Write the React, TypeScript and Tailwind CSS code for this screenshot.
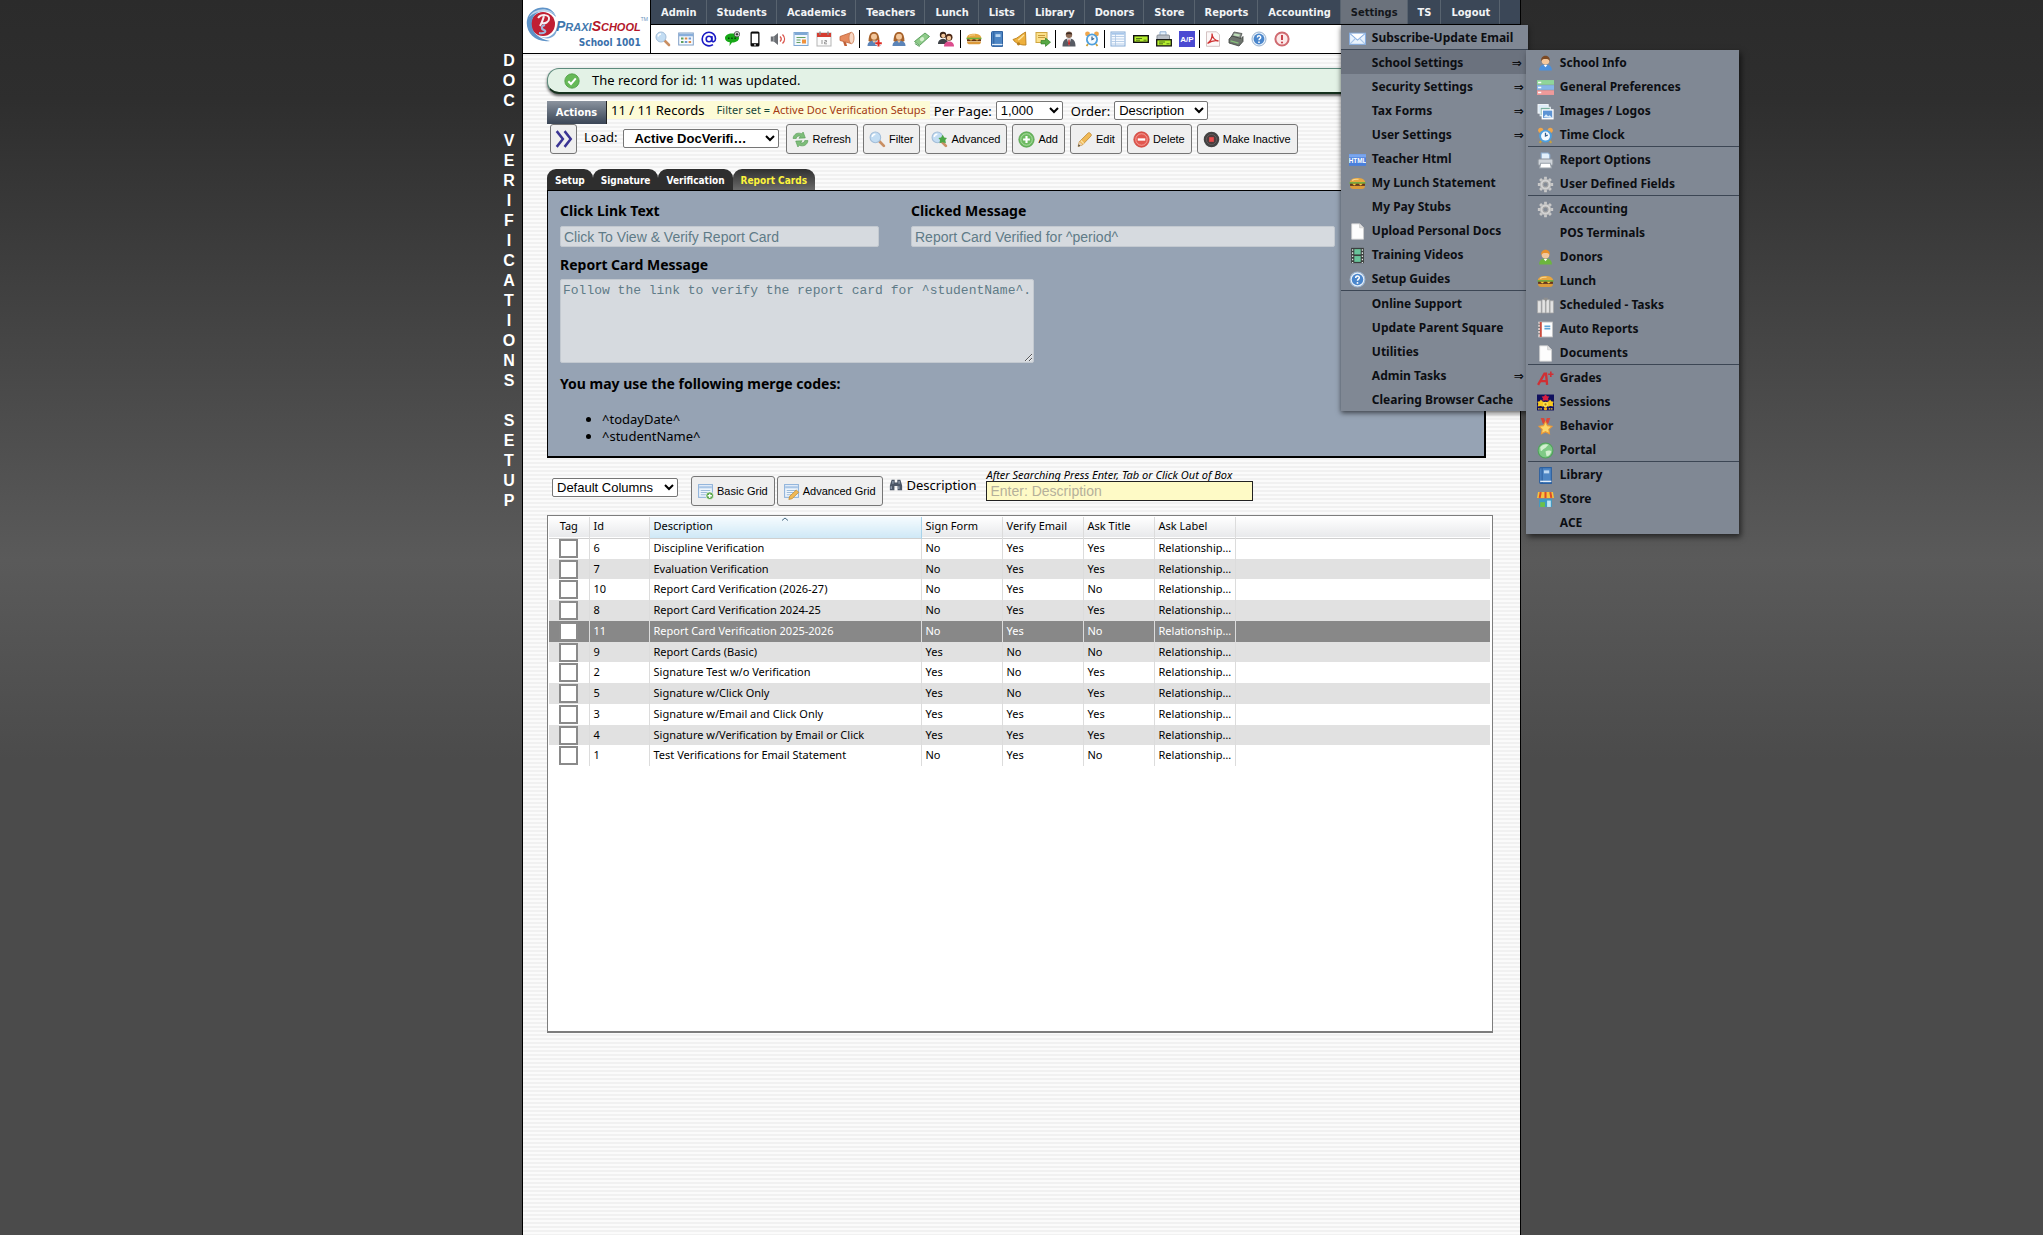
import type { ReactNode } from "react";

const G = {
  skin: "#f3c79b",
  hair: "#8a5428",
};

function Svg({ children, size = "size-4" }: { children: ReactNode; size?: string }) {
  return (
    <svg viewBox="0 0 16 16" className={`${size} shrink-0`} fill="none" aria-hidden="true">
      {children}
    </svg>
  );
}

const magnifier = (
  <>
    <path d="M9.5 9.5 14 14" stroke="#c98f63" strokeWidth="2.6" strokeLinecap="round" />
    <circle cx="6" cy="6" r="5" fill="#c3ddf3" stroke="#a3bdd8" />
    <path d="M3 5.500A3.200 3.200 0 0 1 6 3" stroke="#fff" strokeWidth="1.400" />
  </>
);

const sheet = (
  <>
    <rect x="1.500" y="1.500" width="13" height="12" fill="#eef5fc" stroke="#8fb2da" />
    <path d="M2 4h12" stroke="#a9c6e6" strokeWidth="2" />
    <path d="M3.500 7h9M3.500 9h9M3.500 11h9" stroke="#9dbbd9" />
  </>
);

const bust = (shirt: string, hair: string) => (
  <>
    <path d="M2 14.500c0-4 2.500-5.500 6-5.500s6 1.500 6 5.500z" fill={shirt} />
    <circle cx="8" cy="5.500" r="3.600" fill={G.skin} />
    <path d="M4 6C3.500 2 6 .8 8 .8s4.500 1.200 4 5.200c-.8-1.800-1.500-2.300-4-2.300S4.800 4.200 4 6z" fill={hair} />
    <path d="M6.300 9.300 8 11.500l1.700-2.200z" fill="#fff" />
  </>
);

const woman = (
  <>
    <path d="M2.500 10C3 3 4.500 1 8 1s5 2 5.500 9l-2 1h-7z" fill="#a8632b" />
    <circle cx="8" cy="5.800" r="3" fill={G.skin} />
    <path d="M1.500 15c0-3.800 2.500-5.300 6.500-5.300s6.500 1.500 6.500 5.300z" fill="#5b84b8" />
    <path d="M6.200 9.600 8 12l1.800-2.400z" fill={G.skin} />
  </>
);

const clock = (
  <>
    <circle cx="3.500" cy="3" r="2.400" fill="#f0a64b" />
    <circle cx="12.500" cy="3" r="2.400" fill="#f0a64b" />
    <path d="m4 13-1.500 2M12 13l1.500 2" stroke="#c9a13b" strokeWidth="1.800" />
    <circle cx="8" cy="8.500" r="6" fill="#4f9fdc" />
    <circle cx="8" cy="8.500" r="4.200" fill="#f4fafe" />
    <path d="M8 5.500v3l2.200-1" stroke="#35608c" strokeWidth="1.200" />
  </>
);

const burger = (
  <>
    <path d="M.8 7C1 4 4 2.800 8 2.800S15 4 15.200 7z" fill="#e6a640" />
    <path d="M3 5.200c1.500-1.300 4-1.400 6-1.200" stroke="#f9d890" />
    <path d="M.5 7.500h15" stroke="#6fae3a" strokeWidth="1.600" />
    <path d="M1 9.200h14" stroke="#6b3513" strokeWidth="2" />
    <path d="M3 8.200h4l-2 1.600zM9 8.200h4l-2 1.600z" fill="#f5cf3b" />
    <path d="M1 10.400h14c0 2-1 2.800-3 2.800H4c-2 0-3-.8-3-2.800z" fill="#dc9a3a" />
  </>
);

const book = (
  <>
    <path d="M2.500 1.500A1 1 0 0 1 3.500.6h10v14.800h-10a1 1 0 0 1-1-1z" fill="#4e86c4" stroke="#2c5f9e" />
    <path d="M4.800 1v14" stroke="#2c5f9e" />
    <rect x="6.500" y="3.200" width="5" height="2.800" fill="#bcd8f2" />
    <path d="M3 13.500h10.500" stroke="#e4eef8" strokeWidth="1.200" />
  </>
);

const help = (
  <>
    <circle cx="8" cy="8" r="7" fill="#e7f0fa" stroke="#9ab3cf" />
    <circle cx="8" cy="8" r="5.400" fill="#4a86cc" />
    <path d="M6.300 6.500C6.300 4.200 9.800 4.300 9.700 6.400 9.700 7.600 8 7.700 8 9.200" stroke="#fff" strokeWidth="1.400" />
    <circle cx="8" cy="11.200" r=".9" fill="#fff" />
  </>
);

const printer = (
  <>
    <path d="M4 7V1h6.500L12 2.500V7z" fill="#e3f0fc" stroke="#8fb0d3" />
    <rect x="1" y="6.500" width="14" height="6" rx="1" fill="#cfd4da" stroke="#8b929b" />
    <path d="M3.500 10.500h9l1 4.500h-11z" fill="#fff" stroke="#99a1aa" />
  </>
);

const gear = (
  <>
    <path d="M8 .8v14.400M.8 8h14.400M2.900 2.900l10.200 10.200M13.100 2.900 2.900 13.100" stroke="#c9c9c9" strokeWidth="2.600" />
    <circle cx="8" cy="8" r="5" fill="#d2d2d2" stroke="#b5b5b5" strokeWidth=".6" />
    <circle cx="8" cy="8" r="2.400" fill="#858c97" stroke="#a3a3a3" />
  </>
);

const page = (
  <>
    <path d="M2.500.8H10L13.700 4.500v10.700H2.500z" fill="#fdfdfd" stroke="#d0d0d0" strokeWidth=".7" />
    <path d="M10 .8v3.700h3.700" fill="#e2e2e2" stroke="#c8c8c8" strokeWidth=".7" />
  </>
);

const pencil = (
  <>
    <path d="M2 14.500 3.200 10 11.500 1.800c1-1 3.800 1.600 2.800 2.700L6.200 13z" fill="#f0b955" stroke="#c08a35" strokeWidth=".8" />
    <path d="m4.500 9 2.800 2.800" stroke="#fbe2a6" strokeWidth="1.200" />
    <path d="M2 14.500 3.200 10l3 3z" fill="#e8cfae" />
    <path d="m2 14.500.5-2 1.500 1.500z" fill="#333" />
  </>
);

const plusBadge = (
  <>
    <circle cx="12" cy="12" r="3.600" fill="#5aa64c" stroke="#fff" strokeWidth=".6" />
    <path d="M12 10v4M10 12h4" stroke="#fff" strokeWidth="1.200" />
  </>
);

const greenCard = (
  <>
    <rect x=".7" y="4.700" width="14.600" height="6.600" fill="#b4ee2e" stroke="#111" strokeWidth="1.400" />
    <path d="M3 7.500h6M3 9.200h4M10.500 9.200h3" stroke="#3c5a10" strokeWidth=".8" />
  </>
);

const icons: Record<string, ReactNode> = {
  search: magnifier,
  table: (
    <>
      <rect x=".7" y="2" width="14.600" height="12" fill="#f8fbff" stroke="#7f9fc6" />
      <path d="M1 4h14" stroke="#88aedb" strokeWidth="2.600" />
      <path d="M3 7.500h2.500M3 11h2.500" stroke="#5fa05c" strokeWidth="2" />
      <path d="M6.800 7.500h2.500M10.600 11h2.500" stroke="#d98a4a" strokeWidth="2" />
      <path d="M10.600 7.500h2.500M6.800 11h2.500" stroke="#6f98d0" strokeWidth="2" />
    </>
  ),
  at: (
    <>
      <circle cx="8" cy="8" r="2.800" stroke="#1a1ac4" strokeWidth="1.600" />
      <path d="M10.900 5v4.500c0 2 3.600 1.600 3.600-1.700C14.500 4 11.700 1.200 8 1.200A6.800 6.800 0 0 0 1.200 8c0 5.700 6.200 8.500 10.800 5.600" stroke="#1a1ac4" strokeWidth="1.600" />
    </>
  ),
  chat: (
    <>
      <path d="M8 2.500c4 0 7 1.800 7 4.500s-3 4.600-7 4.600L5.500 15l.3-3.700C2.500 10.800 1 9 1 7c0-2.700 3-4.500 7-4.500z" fill="#17a817" />
      <path d="M4 7.300h1.500M7.200 7.300h1.500M10.400 7.300h1.500" stroke="#063f06" strokeWidth="1.500" />
      <circle cx="13" cy="3.200" r="2.700" fill="#fff" stroke="#222" strokeWidth=".7" />
      <path d="M13 1.700v3M11.500 3.200h3" stroke="#111" />
    </>
  ),
  phone: (
    <>
      <rect x="3.500" y=".5" width="9" height="15" rx="1.500" fill="#0b0b0b" />
      <rect x="4.800" y="2.600" width="6.400" height="9.600" fill="#fff" />
      <circle cx="8" cy="13.900" r=".8" fill="#fff" />
    </>
  ),
  speaker: (
    <>
      <path d="M.8 5.500h3L8 2v12L3.800 10.500h-3z" fill="#6c6f74" />
      <path d="M3.800 5.500v5" stroke="#a9adb3" />
      <path d="M10 5.500c1.500 1.500 1.500 3.500 0 5M12.500 3.500c2.700 2.700 2.700 6.300 0 9" stroke="#d9534a" strokeWidth="1.300" />
    </>
  ),
  form: (
    <>
      <rect x="1" y="1.500" width="14" height="13" fill="#f2f8fe" stroke="#7fa8d4" />
      <path d="M1.500 3h13" stroke="#7fa8d4" strokeWidth="2" />
      <path d="M3.500 6.500h9M3.500 9h4M3.500 11.500h4" stroke="#67a062" strokeWidth="1.200" />
      <rect x="9" y="8.500" width="4" height="4" fill="#f0923e" />
    </>
  ),
  calendar: (
    <>
      <rect x="1" y="2" width="14" height="13" fill="#fbfbfb" stroke="#b5b5b5" />
      <path d="M1 2h14v4H1z" fill="#d53c30" />
      <path d="M4 .6v3.400M12 .6v3.400" stroke="#8b8b8b" strokeWidth="1.400" />
      <path d="M6 9v4M8.500 9.500h2V11h-2v1.800h2.500" stroke="#999" />
    </>
  ),
  megaphone: (
    <>
      <path d="M1 5.500 12 1.500v11L1 9.500z" fill="#e58a5e" stroke="#bf6237" strokeWidth=".8" />
      <ellipse cx="12.500" cy="7" rx="2.500" ry="5.700" fill="#f6d6c3" stroke="#c97a52" strokeWidth=".8" />
      <path d="m4 10.500 1.500 4.500h2.600L7 11.200z" fill="#c05f36" />
    </>
  ),
  womanPlus: (
    <>
      {woman}
      <path d="M12.500 9v6.500M9.300 12.200h6.500" stroke="#fff" strokeWidth="3.400" />
      <path d="M12.500 9v6.500M9.300 12.200h6.500" stroke="#dd2b22" strokeWidth="2" />
    </>
  ),
  woman,
  cash: (
    <>
      <path d="M.5 10.500 11 2l4.500 3.500L5.500 14.500z" fill="#8fcb8a" stroke="#529a55" strokeWidth=".9" />
      <ellipse cx="8" cy="8.200" rx="2.300" ry="1.900" fill="#d7f0d0" transform="rotate(-38 8 8.200)" />
      <path d="m.8 12.500 4.700 3" stroke="#529a55" />
    </>
  ),
  couple: (
    <>
      <circle cx="5" cy="4" r="3.200" fill="#3a2416" />
      <circle cx="5.300" cy="4.800" r="2.100" fill={G.skin} />
      <path d="M0 13c0-3.500 2-5 5-5s5 1.500 5 5z" fill="#3e4247" />
      <circle cx="11" cy="6.200" r="3.500" fill="#4e2a17" />
      <circle cx="11" cy="7" r="2.200" fill={G.skin} />
      <path d="M6 15.500c0-3.500 2-5 5-5s5 1.500 5 5z" fill="#dc4d8d" />
    </>
  ),
  burger,
  book,
  bell: (
    <>
      <path d="M13.500 1 14 14C9 14.500 3 12 1 8.500 6 7.500 8 4 13.500 1z" fill="#eeb03c" stroke="#b97f1d" strokeWidth=".9" />
      <path d="M12 4c-2 1.500-3.500 4-6 5" stroke="#fbe3a0" strokeWidth="1.300" />
      <circle cx="6.500" cy="12.800" r="1.600" fill="#b97f1d" />
    </>
  ),
  noteArrow: (
    <>
      <rect x="1" y="1.500" width="11" height="10" fill="#fbe08a" stroke="#cfa53f" />
      <path d="M3 4.500h7M3 6.500h7" stroke="#c69a3a" />
      <path d="M6 9.500h4.500V7l5 4.200-5 4.200v-2.500H6z" fill="#57a845" stroke="#34802a" strokeWidth=".7" />
    </>
  ),
  suit: (
    <>
      <circle cx="8" cy="3.800" r="3.200" fill="#8c6a55" />
      <path d="M4.800 3.500C5 .6 11 .6 11.200 3.500c-2-.8-4-.8-6.400 0z" fill="#3c2b22" />
      <path d="M1.500 15.500c0-5.500 2-8 6.500-8s6.500 2.500 6.500 8z" fill="#575b63" />
      <path d="M6 7.500 8 15l2-7.500z" fill="#eee" />
      <path d="m7.400 8.500 1.200 0 .5 4.500L8 14.500 7 13z" fill="#c22a2a" />
    </>
  ),
  clock,
  list: (
    <>
      <rect x="1" y="1" width="14" height="14" fill="#f6faff" stroke="#85abd6" />
      <path d="M1.500 2.700h13" stroke="#a7c6ea" strokeWidth="2" />
      <path d="M1.500 5.500h13M1.500 8h13M1.500 10.500h13M1.500 13h13M5.500 2v13" stroke="#a9c4e2" strokeWidth=".8" />
    </>
  ),
  card: greenCard,
  printerCard: (
    <>
      <path d="M4 5V.8h6V5z" fill="#e3f0fc" stroke="#8fb0d3" />
      <rect x="1" y="4" width="12.500" height="5.500" rx="1" fill="#b8bec6" stroke="#868d96" />
      <rect x=".7" y="8.700" width="14.600" height="6.200" fill="#b4ee2e" stroke="#111" strokeWidth="1.300" />
      <path d="M3 11h6M3 12.800h4M10.500 12.800h3" stroke="#3c5a10" strokeWidth=".8" />
    </>
  ),
  ap: (
    <>
      <rect width="16" height="16" fill="#4a4ad2" />
      <text x="8" y="11" textAnchor="middle" fontSize="8" fontWeight="bold" fontFamily="Liberation Sans" fill="#fff">
        A/P
      </text>
    </>
  ),
  pdf: (
    <>
      <path d="M1.500.8h10l3 3v11.500h-13z" fill="#fcf8f8" stroke="#c9b4b4" strokeWidth=".8" />
      <path d="M2.500 12.500C6 10 7.500 6 7 2.500c0 4 3 7 6.500 7.500-3.500-.8-8 .5-11 2.500z" stroke="#cf3434" strokeWidth="1.300" />
    </>
  ),
  register: (
    <>
      <path d="M3 6 6 1l8 1.500L12 8z" fill="#8a8f8a" stroke="#4d524d" strokeWidth=".8" />
      <path d="M6.500 2.500 12 3.500l-.8 2L5.300 4.500z" fill="#bfe0b9" />
      <path d="m1 8 3-3 9 2.500 2-2v5L11 15 1 12z" fill="#6d736d" stroke="#3c413c" strokeWidth=".8" />
      <path d="m2.500 9.800 8 2.400" stroke="#86c07a" strokeWidth="1.400" />
    </>
  ),
  help,
  alert: (
    <>
      <circle cx="8" cy="8" r="6.600" fill="#fbe9e9" stroke="#cf6a70" strokeWidth="2" />
      <path d="M8 4v5" stroke="#c8434b" strokeWidth="2" />
      <circle cx="8" cy="11.500" r="1.100" fill="#c8434b" />
    </>
  ),
  mail: (
    <>
      <rect x=".5" y="3" width="15" height="10.500" fill="#e9f3fd" stroke="#86ade0" />
      <path d="m1 3.500 7 6 7-6" fill="#fff" stroke="#86ade0" />
      <path d="m1 13 5-5M15 13l-5-5" stroke="#a9c6ea" />
    </>
  ),
  html: (
    <>
      <rect x="0" y="3" width="16" height="11" fill="#4a80dc" />
      <path d="M0 3h16v3H0z" fill="#7aa6ee" />
      <text x="8" y="11" textAnchor="middle" fontSize="6" fontWeight="bold" fontFamily="Liberation Sans" fill="#fff">
        HTML
      </text>
    </>
  ),
  page,
  film: (
    <>
      <rect x="2" y=".8" width="12" height="14.400" fill="#3a3f3d" />
      <path d="M3.400 2v13M12.600 2v13" stroke="#d9dfdc" strokeWidth="1.200" strokeDasharray="1.500 1.500" />
      <rect x="5" y="2" width="6" height="5" fill="#68c49a" />
      <rect x="5" y="8.500" width="6" height="5.500" fill="#68c49a" />
    </>
  ),
  userBlue: bust("#4a90dc", "#7c4a24"),
  userGreen: bust("#6cb63e", "#e8912c"),
  prefs: (
    <>
      <rect y="1" width="16" height="4.400" fill="#8fd69a" />
      <rect y="5.800" width="16" height="4.400" fill="#86b6e8" />
      <rect y="10.600" width="16" height="4.400" fill="#ee9a9a" />
      <path d="M1 3.200h3M1 8h3M1 12.800h3" stroke="#fff" strokeWidth="1.400" />
    </>
  ),
  images: (
    <>
      <rect x="1" y="1.500" width="9.500" height="8" fill="#d8e9f8" stroke="#f4f8fb" />
      <rect x="3" y="4" width="9.500" height="8" fill="#79b0a0" stroke="#eaf2f8" />
      <rect x="5" y="6.500" width="10" height="8.300" fill="#5d94d4" stroke="#fff" strokeWidth="1.300" />
      <path d="m6 13.500 2.500-3 2 2 1.500-1 2.500 2.500z" fill="#dcecf9" />
    </>
  ),
  printer,
  gear,
  binders: (
    <>
      <path d="M.5 3.500h3.500V15H.5zM4.700 2.500h3.200V15H4.700zM8.500 2.500h3.200V15H8.500zM12.300 3.500h3.200V15h-3.200z" fill="#e3e3e3" stroke="#a5a5a5" strokeWidth=".7" />
      <path d="M6 .8h4.500l-2.200 4z" fill="#8e8e8e" />
    </>
  ),
  notebook: (
    <>
      <rect x="1.500" y="1" width="13" height="14" fill="#fdfdfd" stroke="#c6c6c6" strokeWidth=".8" />
      <path d="M3.500 1v14" stroke="#cd4a3c" strokeWidth="2" />
      <path d="M1 3h2M1 6h2M1 9h2M1 12h2" stroke="#777" />
      <path d="M7 5h5.500M7 7.300h5.500" stroke="#5da5d8" strokeWidth="1.600" />
    </>
  ),
  grade: (
    <>
      <path d="M1 14 7 3.500h1.500L9.500 14M3.300 10.500h6" stroke="#d02f34" strokeWidth="2.200" />
      <path d="M13 1.500v5M10.500 4h5" stroke="#d02f34" strokeWidth="1.500" />
    </>
  ),
  flowers: (
    <>
      <rect y=".5" width="16" height="15" fill="#10105e" />
      <path d="m8 .5 1.600 1.700 2 .2-1.200 1.900.6 2L8 5.800 5 6.300l.6-2-1.200-1.900 2-.2z" fill="#d81d3f" />
      <path d="m3.700 5.200 1.200 1.700 2.200.8-1.400 1.900 0 2.400-2.200-.8-2.900.5.6-2.500L.3 7.200l2.300-.4z" fill="#f7c81e" />
      <path d="m12.300 5.200-1.200 1.700-2.200.8 1.400 1.900 0 2.400 2.200-.8 2.900.5-.6-2.500.9-2-2.300-.4z" fill="#f7c81e" />
      <circle cx="8" cy="9.800" r="2.500" fill="#fbe04d" />
      <circle cx="8" cy="9.800" r="1" fill="#b57d10" />
      <circle cx="8" cy="13.800" r="1.600" fill="#f0a91b" />
      <path d="M1 14h4M11 14h4" stroke="#f0c93b" strokeWidth="1.400" strokeDasharray="1.500 .6" />
    </>
  ),
  medal: (
    <>
      <path d="M3.500 0h3.200l2 5.500H5.500zM12.500 0H9.300l-2 5.500h3.200z" fill="#d9473a" />
      <path d="m8 3.500 1.900 3.700 4.200.6-3 2.900.7 4.100L8 12.900l-3.800 1.900.7-4.100-3-2.900 4.200-.6z" fill="#fbd66a" stroke="#ee9a35" />
    </>
  ),
  globe: (
    <>
      <circle cx="8" cy="8" r="7" fill="#7fca86" stroke="#4fa35a" />
      <path d="M3 5c2-3 6-3.500 8-2.500-2 1-2 3-4 3.500S5 9 3.500 8.500zM8 9c2-1.500 5-1 5.500 0-.5 2.500-2.500 4.500-4.500 4.500z" fill="#d2f0cf" />
    </>
  ),
  store: (
    <>
      <path d="M2 7.500h12V15H2z" fill="#3f9bc4" />
      <path d="M1 1h14l1 5.500H0z" fill="#f6c33e" />
      <path d="M3.500 1 2.500 6.500M8 1v5.500M12.500 1l1 5.500" stroke="#d94a2a" strokeWidth="1.900" />
      <path d="M3 10.500h4.500V15H3z" fill="#6cc04a" />
      <path d="M9.500 9h3.500v6H9.500z" fill="#bfe6f5" />
    </>
  ),
  check: (
    <>
      <circle cx="8" cy="8" r="7.200" fill="#66b957" stroke="#4d9c43" strokeWidth=".8" />
      <path d="m4.300 8.200 2.700 2.800 4.800-5.600" stroke="#fff" strokeWidth="2" />
    </>
  ),
  refresh: (
    <>
      <path d="M1 7C1.500 3 5 1 9 2.500l1.500-1.500 2 5.500-6 .3 1.500-1.700C6 4.200 4.500 5 4 7z" fill="#7dbd79" stroke="#569a55" strokeWidth=".6" />
      <path d="M15 9c-.5 4-4 6-8 4.500L5.500 15l-2-5.500 6-.3L8 10.900c2 .9 3.500.1 4-1.900z" fill="#7dbd79" stroke="#569a55" strokeWidth=".6" />
    </>
  ),
  searchPlus: (
    <>
      {magnifier}
      <path d="m11 3.500 1.500 2.500 2.500.5-1.500 2 .5 3-3-1-3 1 .5-3-1.500-2 2.500-.5z" fill="#4ba545" />
    </>
  ),
  add: (
    <>
      <circle cx="8" cy="8" r="7.200" fill="#6cba60" stroke="#54a04b" strokeWidth=".8" />
      <circle cx="8" cy="8" r="5.400" stroke="#b7e0ae" strokeWidth=".8" />
      <path d="M8 4.800v6.400M4.800 8h6.400" stroke="#fff" strokeWidth="2" />
    </>
  ),
  pencil,
  remove: (
    <>
      <circle cx="8" cy="8" r="7.200" fill="#e2574e" stroke="#c9433b" strokeWidth=".8" />
      <circle cx="8" cy="8" r="5.400" stroke="#f4aaa4" strokeWidth=".8" />
      <path d="M4.500 8h7" stroke="#fff" strokeWidth="2.200" />
    </>
  ),
  stop: (
    <>
      <circle cx="8" cy="8" r="7.300" fill="#424242" />
      <circle cx="8" cy="8" r="4.800" fill="#4e3c3c" stroke="#6d6d6d" strokeWidth=".6" />
      <rect x="5.800" y="5.800" width="4.400" height="4.400" fill="#ea4b4b" />
    </>
  ),
  gridAdd: (
    <>
      {sheet}
      {plusBadge}
    </>
  ),
  gridEdit: (
    <>
      {sheet}
      <path d="m5.500 15.500.8-3L12.500 6.500l2.300 2.300-6.300 6z" fill="#f0b955" stroke="#c08a35" strokeWidth=".7" />
    </>
  ),
  binoculars: (
    <>
      <path d="M3 2h3.500v3h3V2H13l2 6.500V14H9.800V9H6.200v5H1V8.500z" fill="#4b5666" />
      <path d="M2.500 9.500v3M11.300 9.500v3M4.500 3.500v3M11.500 3.500v3" stroke="#a3b1c2" strokeWidth="1.200" />
    </>
  ),
  chevrons: <path d="m1.500 1 5.500 7-5.500 7M8.500 1 14 8l-5.500 7" stroke="#3a3494" strokeWidth="2.200" />,
};

function Icon({ name, size }: { name: string; size?: string }) {
  return <Svg size={size}>{icons[name]}</Svg>;
}

type MenuEntry = { label: string; icon?: string; arrow?: boolean; active?: boolean };

const settingsMenu: MenuEntry[][] = [
  [{ label: "Subscribe-Update Email", icon: "mail" }],
  [
    { label: "School Settings", arrow: true, active: true },
    { label: "Security Settings", arrow: true },
    { label: "Tax Forms", arrow: true },
    { label: "User Settings", arrow: true },
    { label: "Teacher Html", icon: "html" },
    { label: "My Lunch Statement", icon: "burger" },
    { label: "My Pay Stubs" },
    { label: "Upload Personal Docs", icon: "page" },
    { label: "Training Videos", icon: "film" },
    { label: "Setup Guides", icon: "help" },
  ],
  [
    { label: "Online Support" },
    { label: "Update Parent Square" },
    { label: "Utilities" },
    { label: "Admin Tasks", arrow: true },
    { label: "Clearing Browser Cache" },
  ],
];

const schoolMenu: MenuEntry[][] = [
  [
    { label: "School Info", icon: "userBlue" },
    { label: "General Preferences", icon: "prefs" },
    { label: "Images / Logos", icon: "images" },
    { label: "Time Clock", icon: "clock" },
  ],
  [
    { label: "Report Options", icon: "printer" },
    { label: "User Defined Fields", icon: "gear" },
  ],
  [
    { label: "Accounting", icon: "gear" },
    { label: "POS Terminals" },
    { label: "Donors", icon: "userGreen" },
    { label: "Lunch", icon: "burger" },
    { label: "Scheduled - Tasks", icon: "binders" },
    { label: "Auto Reports", icon: "notebook" },
    { label: "Documents", icon: "page" },
  ],
  [
    { label: "Grades", icon: "grade" },
    { label: "Sessions", icon: "flowers" },
    { label: "Behavior", icon: "medal" },
    { label: "Portal", icon: "globe" },
  ],
  [
    { label: "Library", icon: "book" },
    { label: "Store", icon: "store" },
    { label: "ACE" },
  ],
];

function MenuRow({ entry }: { entry: MenuEntry }) {
  return (
    <a
      href="#"
      className={`flex h-6 items-center gap-1.5 pt-0.5 pr-1 pl-2 text-xs font-bold whitespace-nowrap text-[#0c0e12] ${
        entry.active ? "mr-0.5 bg-[#6b727e]" : ""
      }`}
    >
      <span className="flex w-[17px] justify-center">{entry.icon && <Icon name={entry.icon} size="size-[17px]" />}</span>
      <span className="grow">{entry.label}</span>
      {entry.arrow && <span className="font-['DejaVu_Sans']">⇒</span>}
    </a>
  );
}

function SchoolSubmenu() {
  return (
    <ul className="absolute top-0 left-[185px] z-0 w-[213px] bg-[#808894] pl-[2px] shadow-[2px_3px_6px_rgba(0,0,0,0.6)]">
      {schoolMenu.map((group, g) => (
        <li key={g} className={g > 0 ? "border-t border-[#3c4654]" : ""}>
          <ul className="pl-px">
            {group.map((entry) => (
              <li key={entry.label}>
                <MenuRow entry={entry} />
              </li>
            ))}
          </ul>
        </li>
      ))}
    </ul>
  );
}

function SettingsDropdown() {
  return (
    <ul className="absolute top-full left-0 z-20 mt-px w-[187px] bg-[#808894] font-['Noto_Sans',sans-serif] shadow-[0_2px_5px_rgba(0,0,0,0.6)]">
      {settingsMenu.map((group, g) => (
        <li key={g} className={g > 0 ? "border-t border-[#3c4654]" : ""}>
          <ul>
            {group.map((entry) => (
              <li key={entry.label} className="relative">
                <MenuRow entry={entry} />
                {entry.active && <SchoolSubmenu />}
              </li>
            ))}
          </ul>
        </li>
      ))}
    </ul>
  );
}

const navItems = [
  "Admin", "Students", "Academics", "Teachers", "Lunch", "Lists", "Library", "Donors",
  "Store", "Reports", "Accounting", "Settings", "TS", "Logout",
];

const toolGroups: string[][] = [
  ["search", "table", "at", "chat", "phone", "speaker", "form", "calendar", "megaphone"],
  ["womanPlus", "woman", "cash", "couple"],
  ["burger", "book", "bell", "noteArrow"],
  ["suit", "clock"],
  ["list", "card", "printerCard", "ap"],
  ["pdf", "register", "help", "alert"],
];

function Header() {
  return (
    <header className="flex h-[54px] border-b border-black bg-white">
      <a href="#" className="flex w-32 shrink-0 border-r border-black pl-[3px]" aria-label="PraxiSchool School 1001">
        <svg viewBox="0 0 34 38" className="mt-1.5 h-[38px] w-[34px] shrink-0" aria-hidden="true">
          <circle cx="17" cy="18" r="12" fill="#c01f33" />
          <path d="M30 11C26-3 4-1 1 14c-2 12 8 23 23 21C12 33 4 25 6 15 8 4 22 1 30 11z" fill="#5f93c8" />
          <path d="M3 11C8 2 23 0 30 10 24 4 11 4 3 11z" fill="#b9d3ec" />
          <path d="M13 30c8 4 16-1 18-9 1 9-8 15-18 9z" fill="#7ea9d6" />
          <path d="M14 20c2-3 3-7 4-10M12 12c3-4 12-4 11 1 0 3-4 5-7 4" fill="none" stroke="#f6eef2" strokeWidth="2" />
          <path d="M19 19c-4 1-4 4-1 5s1 4-5 3" fill="none" stroke="#9fb8dd" strokeWidth="2" />
        </svg>
        <span className="-ml-1 flex flex-col items-end pt-[18px] whitespace-nowrap">
          <span className="flex items-baseline font-['Liberation_Sans'] text-[11px] leading-4 font-bold italic">
            <span className="text-[#3f78ad]"><span className="text-sm leading-4">P</span>RAXI</span>
            <span className="text-[#b3172b]"><span className="text-sm leading-4">S</span>CHOOL</span>
          </span>
          <span className="font-['DejaVu_Sans_Condensed','DejaVu_Sans'] text-[10px] leading-4 font-bold text-[#3a70aa]">School 1001</span>
        </span>
        <span className="pt-4 text-[5px] text-[#6b93bd]">TM</span>
      </a>
      <div className="flex grow flex-col">
        <nav className="h-[25px] border-b border-black bg-[#3b4757]">
          <ul className="flex h-full font-['DejaVu_Sans_Condensed','DejaVu_Sans'] text-[11px] font-bold">
            {navItems.map((item) => (
              <li key={item} className="relative border-r border-[#58636f]">
                <a
                  href="#"
                  className={`flex h-full items-center pt-0.5 pr-[9px] pl-[10px] ${
                    item === "Settings" ? "bg-[#6b727c] text-[#14171b]" : "text-[#f1f3f5]"
                  }`}
                >
                  {item}
                </a>
                {item === "Settings" && <SettingsDropdown />}
              </li>
            ))}
          </ul>
        </nav>
        <div className="flex grow items-center">
          {toolGroups.map((group, g) => (
            <div key={g} className="flex items-center">
              {g > 0 && <span className="mx-px h-[18px] w-px bg-black" />}
              {group.map((name) => (
                <button
                  key={name}
                  type="button"
                  aria-label={name}
                  className={`flex justify-center ${name === "womanPlus" || name === "couple" ? "w-[26px]" : "w-[23px]"}`}
                >
                  <Icon name={name} />
                </button>
              ))}
            </div>
          ))}
        </div>
      </div>
    </header>
  );
}

const selectClass = "h-[19px] rounded-[2px] border border-[#767676] bg-white font-['Liberation_Sans'] text-[13px] text-black";

function ToolButton({ icon, label }: { icon: string; label: string }) {
  return (
    <button
      type="button"
      className="flex h-[30px] items-center gap-[3px] rounded-[3px] border border-[#767676] bg-[#efefef] pr-1.5 pl-[5px] font-['Liberation_Sans'] text-[11px] whitespace-nowrap text-black"
    >
      <Icon name={icon} size="size-[17px]" />
      {label}
    </button>
  );
}

function RecordBar() {
  return (
    <div className="mt-[7px]">
      <div className="flex h-[23px] text-[13px] leading-[18px]">
        <button
          type="button"
          className="flex h-[23px] w-[60px] items-center justify-center border-r border-[#222] bg-linear-to-b from-[#8b949f] to-[#3b4656] font-['DejaVu_Sans_Condensed','DejaVu_Sans'] text-[11px] font-bold text-white"
        >
          Actions
        </button>
        <div className="flex h-[18px] items-center gap-3 bg-[#fdfbd6] px-1">
          <span>11 / 11 Records</span>
          <span className="text-[11px] text-[#17463a]">
            Filter set = <span className="text-[#a33a12]">Active Doc Verification Setups</span>
          </span>
        </div>
        <label className="ml-1 flex h-[19px] items-center gap-1">
          Per Page:
          <select className={`${selectClass} w-[67px]`}>
            <option>1,000</option>
          </select>
        </label>
        <label className="ml-2 flex h-[19px] items-center gap-1">
          Order:
          <select className={`${selectClass} w-[94px]`}>
            <option>Description</option>
          </select>
        </label>
      </div>
      <div className="flex items-start gap-[5px] pl-[3px]">
        <button type="button" aria-label="Expand" className="flex h-[30px] w-[27px] items-center justify-center rounded-[3px] border border-[#767676] bg-[#efefef]">
          <Icon name="chevrons" size="size-[18px]" />
        </button>
        <label className="flex h-7 items-center gap-1.5 px-0.5 text-[13px]">
          Load:
          <select className={`${selectClass} w-[156px] pl-1.5 font-bold`}>
            <option>Active DocVerifi…</option>
          </select>
        </label>
        <ToolButton icon="refresh" label="Refresh" />
        <ToolButton icon="search" label="Filter" />
        <ToolButton icon="searchPlus" label="Advanced" />
        <ToolButton icon="add" label="Add" />
        <ToolButton icon="pencil" label="Edit" />
        <ToolButton icon="remove" label="Delete" />
        <ToolButton icon="stop" label="Make Inactive" />
      </div>
    </div>
  );
}

const fieldClass =
  "block rounded-[2px] border border-[#c3c9d0] bg-[#d6dadf] text-[#5f7b87] placeholder:text-[#5f7b87]";

function ReportCardsPanel() {
  return (
    <section className="mr-[9px] h-[268px] border border-r-2 border-b-2 border-black bg-[#96a3b4] px-3 pt-[10px] text-sm">
      <div className="flex gap-8">
        <div className="flex w-[319px] flex-col">
          <label htmlFor="clickText" className="mb-[5px] leading-5 font-bold">Click Link Text</label>
          <input id="clickText" placeholder="Click To View & Verify Report Card" className={`${fieldClass} h-[21px] w-full px-[3px] font-['Liberation_Sans'] text-sm`} />
        </div>
        <div className="flex w-[424px] flex-col">
          <label htmlFor="clickedMessage" className="mb-[5px] leading-5 font-bold">Clicked Message</label>
          <input id="clickedMessage" placeholder="Report Card Verified for ^period^" className={`${fieldClass} h-[21px] w-full px-[3px] font-['Liberation_Sans'] text-sm`} />
        </div>
      </div>
      <label htmlFor="message" className="mt-2 block leading-5 font-bold">Report Card Message</label>
      <textarea
        id="message"
        placeholder="Follow the link to verify the report card for ^studentName^."
        className={`${fieldClass} mt-1 h-[84px] w-[474px] resize overflow-hidden pt-[3px] pl-0.5 font-['Liberation_Mono'] text-[13px] leading-4 whitespace-pre`}
      />
      <p className="mt-[11px] leading-5 font-bold">You may use the following merge codes:</p>
      <ul className="mt-[17px] list-disc pl-[42px] text-[13px] leading-[17px]">
        <li>^todayDate^</li>
        <li>^studentName^</li>
      </ul>
    </section>
  );
}

const tabs = ["Setup", "Signature", "Verification", "Report Cards"];

function Tabs() {
  return (
    <div role="tablist" className="mt-[15px] flex h-[21px] font-['DejaVu_Sans_Condensed','DejaVu_Sans'] text-[10px] font-bold">
      {tabs.map((tab) => (
        <button
          key={tab}
          type="button"
          role="tab"
          aria-selected={tab === "Report Cards"}
          className={`rounded-t-[9px] px-2 pt-0.5 ${
            tab === "Report Cards" ? "bg-linear-to-b from-[#303030] to-[#6a6a6a] text-[#fdf43c]" : "bg-[#2e2e2e] text-white"
          }`}
        >
          {tab}
        </button>
      ))}
    </div>
  );
}

const columns = [
  { label: "Tag", width: "w-[40px]" },
  { label: "Id", width: "w-[60px]" },
  { label: "Description", width: "w-[272px]" },
  { label: "Sign Form", width: "w-[81px]" },
  { label: "Verify Email", width: "w-[81px]" },
  { label: "Ask Title", width: "w-[71px]" },
  { label: "Ask Label", width: "w-[81px]" },
];

const records = [
  ["6", "Discipline Verification", "No", "Yes", "Yes"],
  ["7", "Evaluation Verification", "No", "Yes", "Yes"],
  ["10", "Report Card Verification (2026-27)", "No", "Yes", "No"],
  ["8", "Report Card Verification 2024-25", "No", "Yes", "Yes"],
  ["11", "Report Card Verification 2025-2026", "No", "Yes", "No"],
  ["9", "Report Cards (Basic)", "Yes", "No", "No"],
  ["2", "Signature Test w/o Verification", "Yes", "No", "Yes"],
  ["5", "Signature w/Click Only", "Yes", "No", "Yes"],
  ["3", "Signature w/Email and Click Only", "Yes", "Yes", "Yes"],
  ["4", "Signature w/Verification by Email or Click", "Yes", "Yes", "Yes"],
  ["1", "Test Verifications for Email Statement", "No", "Yes", "No"],
];

function RecordsGrid() {
  return (
    <div className="mr-0.5 h-[518px] border border-b-2 border-[#7d7d7d] bg-white p-px pr-0.5">
      <table className="w-full table-fixed border-collapse text-[11px] leading-4">
        <thead>
          <tr className="h-[21px] border-b border-[#cfcfcf] bg-linear-to-b from-white to-[#e8e9eb] text-left">
            {columns.map((column) => (
              <th
                key={column.label}
                className={`${column.width} border-r p-0 pb-0.5 font-normal ${
                  column.label === "Tag" ? "text-center" : "pl-1"
                } ${
                  column.label === "Description"
                    ? "relative border-x border-[#a8d3ea] bg-linear-to-b from-[#f5fbfe] to-[#cfe8f6]"
                    : "border-[#dcdcdc]"
                }`}
              >
                {column.label}
                {column.label === "Description" && (
                  <svg viewBox="0 0 8 4" className="absolute top-0 left-1/2 -ml-1 h-1 w-2" aria-hidden="true">
                    <path d="M1 3.500 4 1l3 2.500" fill="none" stroke="#4a6a82" />
                  </svg>
                )}
              </th>
            ))}
            <th className="p-0" />
          </tr>
        </thead>
        <tbody>
          {records.map(([id, description, sign, verify, title], i) => {
            const selected = id === "11";
            return (
              <tr
                key={id}
                className={`${i % 4 === 1 ? "h-5" : "h-[21px]"} ${
                  selected ? "bg-[#888888] text-white" : i % 2 ? "bg-[#e1e1e1]" : "bg-white"
                }`}
              >
                <td className="border-r border-[#dcdcdc] p-0">
                  <input
                    type="checkbox"
                    aria-label={`Tag ${description}`}
                    className="mx-auto block size-[19px] appearance-none rounded-none border-2 border-[#8a8a8a] bg-white"
                  />
                </td>
                {[id, description, sign, verify, title].map((value, c) => (
                  <td key={c} className="border-r border-[#dcdcdc] p-0 pb-px pl-1 whitespace-nowrap">
                    {value}
                  </td>
                ))}
                <td className="border-r border-[#dcdcdc] p-0 pb-px pl-1 whitespace-nowrap">Relationship…</td>
                <td className="p-0" />
              </tr>
            );
          })}
        </tbody>
      </table>
    </div>
  );
}

function GridToolbar() {
  return (
    <div className="flex h-[57px] items-start pt-[11px] pl-[5px]">
      <select aria-label="Columns" className={`${selectClass} mt-[9px] w-[126px]`}>
        <option>Default Columns</option>
      </select>
      <div className="mt-[7px] ml-[13px] flex gap-0.5">
        <ToolButton icon="gridAdd" label="Basic Grid" />
        <ToolButton icon="gridEdit" label="Advanced Grid" />
      </div>
      <label htmlFor="findDescription" className="mt-1.5 ml-1.5 flex items-center gap-1 text-[13px] leading-5">
        <Icon name="binoculars" size="size-[14px]" />
        Description
      </label>
      <div className="ml-2.5 flex w-[267px] flex-col">
        <span className="text-[11px] leading-3 whitespace-nowrap italic">After Searching Press Enter, Tab or Click Out of Box</span>
        <input
          id="findDescription"
          placeholder="Enter: Description"
          className="h-5 w-full border border-[#222] bg-[#fefac6] px-[3px] font-['Liberation_Sans'] text-sm placeholder:text-[#b5b09a]"
        />
      </div>
    </div>
  );
}

export default function App() {
  return (
    <div className="flex min-h-screen justify-center bg-[linear-gradient(to_bottom,#2b2b2b_0px,#2e2e2e_100px,#5a5a5a_560px,#4b4b4b_760px)] font-['Noto_Sans',sans-serif] text-black">
      <aside className="flex flex-1 justify-end">
        <h1 className="mr-1 w-[18px] pt-[51px] text-center font-['Liberation_Sans'] text-base leading-5 font-bold text-white">
          {"DOC VERIFICATIONS SETUP".split("").map((letter, i) => (
            <span key={i} className="block h-5">
              {letter}
            </span>
          ))}
        </h1>
      </aside>
      <div className="w-full max-w-[999px] border-x border-black bg-[repeating-linear-gradient(to_bottom,#fbfbfb_0px,#fbfbfb_2px,#f1f1f1_2px,#f1f1f1_4px)]">
        <Header />
        <main className="pr-[25px] pl-6">
          <p className="mt-3.5 flex h-[26px] items-center gap-3 rounded-xl border border-b-2 border-[#5d8a7c] border-b-[#14301c] bg-[#e3f2e6] pl-4 text-[13px] shadow-[0_2px_3px_rgba(0,0,0,0.6)]">
            <Icon name="check" />
            The record for id: 11 was updated.
          </p>
          <RecordBar />
          <Tabs />
          <ReportCardsPanel />
          <GridToolbar />
          <RecordsGrid />
        </main>
      </div>
      <div className="flex-1" />
    </div>
  );
}
